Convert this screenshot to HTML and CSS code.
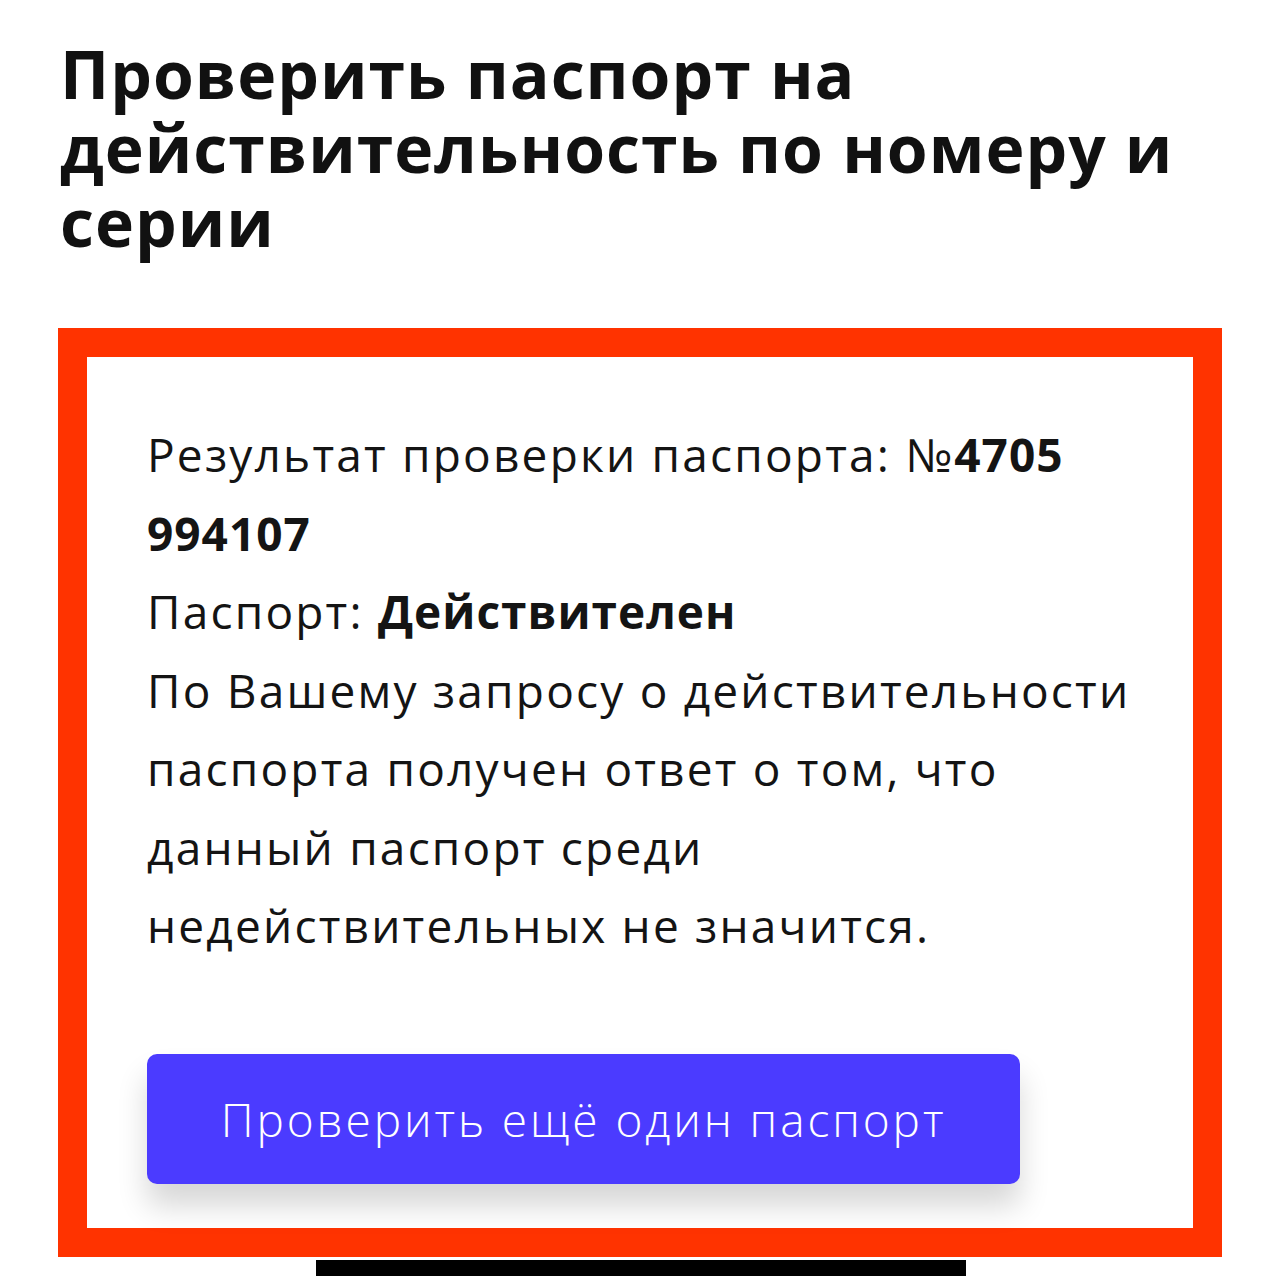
FILE: index.html
```html
<!DOCTYPE html>
<html lang="ru">
<head>
<meta charset="utf-8">
<link rel="stylesheet" href="styles.css">
</head>
<body>
<main class="page">
  <h1 class="title">Проверить паспорт на<br>действительность по номеру и<br>серии</h1>
  <section class="frame">
    <div class="card">
      <div class="result">
        <p class="line">Результат проверки паспорта: №<b>4705<br>994107</b></p>
        <p class="line">Паспорт: <b>Действителен</b></p>
        <p class="line">По Вашему запросу о действительности<br>паспорта получен ответ о том, что<br>данный паспорт среди<br>недействительных не значится.</p>
      </div>
      <button class="btn" type="button">Проверить ещё один паспорт</button>
    </div>
  </section>
  <div class="bottom-bar"></div>
</main>
</body>
</html>
```
FILE: styles.css
```css
html, body {
  margin: 0;
  padding: 0;
  background: #ffffff;
}
.page {
  width: 1280px;
  height: 1276px;
  overflow: hidden;
  font-family: "Open Sans", "Noto Sans", sans-serif;
  color: #111111;
}
.title {
  margin: 0;
  padding: 36px 0 0 60px;
  font-size: 66px;
  line-height: 74px;
  font-weight: 700;
  letter-spacing: 1px;
  color: #111111;
}
.frame {
  margin: 70px 0 0 58px;
  width: 1106px;
  border: 29px solid #ff3300;
  background: #ffffff;
}
.card {
  padding: 58px 0 44px 60px;
}
.result {
  font-size: 46px;
  line-height: 78.5px;
  font-weight: 400;
  letter-spacing: 2.2px;
  color: #141414;
}
.line {
  margin: 0;
}
.line b {
  font-weight: 700;
  letter-spacing: 1px;
}
.btn {
  display: block;
  margin-top: 89px;
  width: 873px;
  height: 130px;
  border: 0;
  border-radius: 10px;
  background: #4b3bff;
  color: #ffffff;
  font-family: "Open Sans", "Noto Sans", sans-serif;
  font-size: 46px;
  font-weight: 300;
  letter-spacing: 2.9px;
  box-shadow: 0 22px 30px rgba(0, 0, 0, 0.16);
  cursor: pointer;
}
.bottom-bar {
  margin: 3px 0 0 316px;
  width: 650px;
  height: 30px;
  background: #000000;
}
```
